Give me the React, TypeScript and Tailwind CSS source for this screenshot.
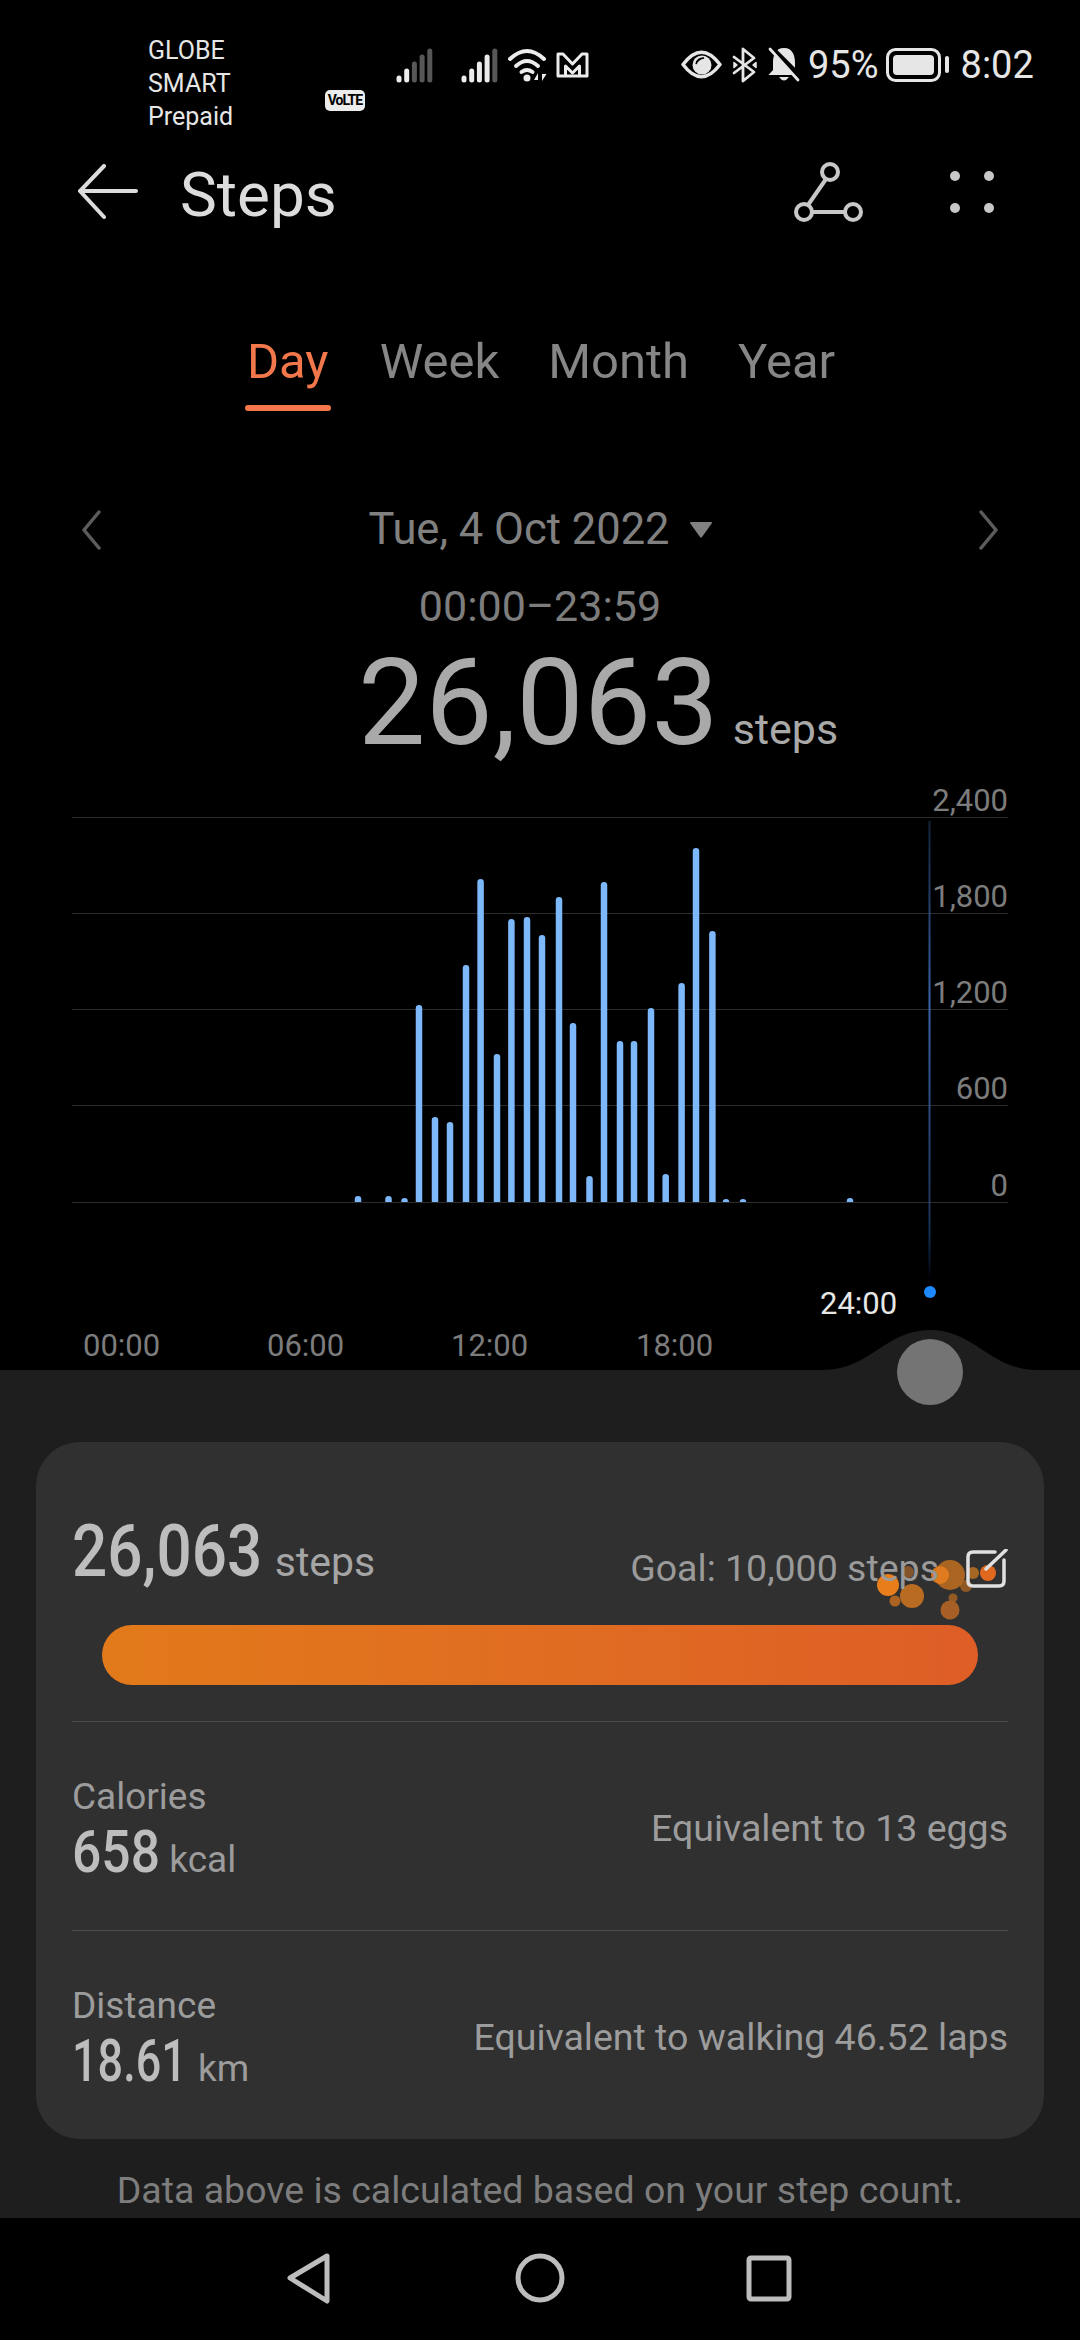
import React from 'react';

const bars: [number, number][] = [
  [358, 1197], [388.5, 1197], [404.5, 1199], [419, 1006], [435, 1118], [450, 1123],
  [466, 966], [480.6, 880], [497, 1055], [511.4, 920], [527, 918], [542, 936],
  [559, 898], [573, 1024], [589.5, 1177], [604, 883], [620, 1042], [634, 1042],
  [651, 1009], [665.7, 1175], [681.6, 984], [696, 849], [712.4, 932], [726, 1200],
  [743, 1200], [850, 1199],
];

const gridLines = [818, 914, 1010, 1106, 1203];
const yLabels: [string, number][] = [['2,400', 812], ['1,800', 908], ['1,200', 1004], ['600', 1100], ['0', 1197]];
const xLabels: [string, number][] = [['00:00', 83], ['06:00', 267], ['12:00', 451], ['18:00', 636]];

const bubbles: [number, number, number, string, number][] = [
  [908, 1573, 6, '#a8642a', 0.7],
  [950, 1576, 15, '#c9731f', 0.8],
  [940, 1576, 9, '#ea7f1f', 0.85],
  [966, 1587, 6, '#b86a20', 0.7],
  [973, 1574, 6, '#c4761f', 0.8],
  [988, 1574, 8, '#e0691f', 1],
  [888, 1586, 11, '#e87d1c', 1],
  [912, 1597, 12, '#c26f22', 0.95],
  [895, 1602, 5.5, '#b8691f', 0.9],
  [953, 1599, 4.5, '#a05f24', 0.9],
  [950, 1611, 9.5, '#ad6224', 0.95],
];

function Signal({ bright }: { bright: number }) {
  const tops = [76, 69, 62, 55, 49];
  return (
    <svg width="38" height="36" viewBox="0 47 38 36">
      {tops.map((t, i) => (
        <line
          key={i}
          x1={3 + i * 7.7}
          x2={3 + i * 7.7}
          y1={t + 2}
          y2={80}
          stroke={i < bright ? '#ececec' : '#575757'}
          strokeWidth="5"
          strokeLinecap="round"
        />
      ))}
    </svg>
  );
}

function StatusIcons() {
  return (
    <>
      <svg width="40" height="36" viewBox="506 47 40 36" className="ml-[8px]" fill="none" stroke="#ececec" strokeWidth="4" strokeLinecap="round">
        <path d="M509 59 Q526 43 543 59" />
        <path d="M515 66 Q526 56 537 66" />
        <path d="M520.500 72 Q526 68 531.500 72" />
        <circle cx="526" cy="78" r="3.500" fill="#ececec" stroke="none" />
        <path d="M537 80 V73 L533 80 Z M541 74 V81 L545.500 74 Z" fill="#ececec" stroke="none" />
      </svg>
      <svg width="34" height="28" viewBox="555 52 34 28" className="ml-[9px]" fill="none" stroke="#ececec" strokeWidth="3" strokeLinejoin="round">
        <path d="M557 77 V55 H562 L571.500 65 L581 55 H586 V77 Z" />
        <path d="M564.500 77 V67 L571.500 74 L578.500 67 V77" />
      </svg>
    </>
  );
}

function RightIcons() {
  return (
    <>
      <svg width="42" height="30" viewBox="680 52 42 30" fill="none">
        <path d="M682 66.500 Q700.500 42 719 66.500 Q700.500 91 682 66.500 Z" stroke="#e6e6e6" strokeWidth="3.500" strokeLinejoin="round" />
        <circle cx="701" cy="67" r="9.500" fill="#e6e6e6" />
        <path d="M695 66 A7 7 0 0 1 703 60 A10 10 0 0 0 695 66 Z" fill="#000" stroke="#000" strokeWidth="1.500" />
      </svg>
      <svg width="26" height="38" viewBox="732 47 26 38" className="ml-[9px]" fill="none" stroke="#e6e6e6" strokeWidth="2.800" strokeLinejoin="round" strokeLinecap="round">
        <path d="M734 58 L754 73 L743 82 V50 L754 59 L734 74" />
        <path d="M734 63.500 L737 66 L734 68.500 Z M756 63.500 L753 66 L756 68.500 Z" fill="#e6e6e6" strokeWidth="1.500" />
      </svg>
      <svg width="34" height="36" viewBox="767 49 34 36" className="ml-[9px]">
        <path d="M784 50 C775 50 773 58 773 65 V72 L768.500 77 H799 L795 72 V65 C795 58 793 50 784 50 Z" fill="#e6e6e6" />
        <path d="M779 79 H789 Q784 86 779 79 Z" fill="#e6e6e6" />
        <line x1="771" y1="50" x2="801" y2="80" stroke="#000" strokeWidth="6" />
        <line x1="770" y1="51" x2="798" y2="82" stroke="#e6e6e6" strokeWidth="2.800" strokeLinecap="round" />
      </svg>
      <span className="ml-[7px] text-[38px] leading-none text-[#e6e6e6]">95%</span>
      <svg width="64" height="36" viewBox="883 49 64 36" className="ml-[7px]" fill="none">
        <rect x="884.500" y="51.500" width="52" height="31" rx="8" stroke="#e6e6e6" strokeWidth="3" />
        <rect x="890" y="57" width="41" height="20" rx="4" fill="#e6e6e6" />
        <rect x="942" y="58" width="4" height="17" rx="2" fill="#e6e6e6" />
      </svg>
      <span className="ml-[11px] text-[38px] leading-none text-[#e6e6e6]">8:02</span>
    </>
  );
}

function Chart() {
  return (
    <svg width="1080" height="591" viewBox="0 780 1080 591" className="block" fontFamily="Roboto, sans-serif">
      <defs>
        <linearGradient id="cursor" x1="0" y1="820" x2="0" y2="1280" gradientUnits="userSpaceOnUse">
          <stop offset="0" stopColor="#2f5590" stopOpacity="0.4" />
          <stop offset="0.4" stopColor="#3a64a8" />
          <stop offset="0.85" stopColor="#2a4a80" stopOpacity="0.7" />
          <stop offset="1" stopColor="#1e88ff" stopOpacity="0" />
        </linearGradient>
      </defs>
      {gridLines.map((y) => (
        <line key={y} x1="72" x2="1008" y1={y + 0.5} y2={y + 0.5} stroke="#2c2c2c" strokeWidth="1" />
      ))}
      {yLabels.map(([label, y]) => (
        <text key={label} x="1008" y={y} textAnchor="end" fontSize="31" fill="#7c7c7c">{label}</text>
      ))}
      <rect x="928.500" y="822" width="2" height="458" fill="url(#cursor)" />
      {bars.map(([x, top]) => (
        <path
          key={x}
          d={`M${x - 3.25} 1203 V${top + 3.25} a3.25 3.25 0 0 1 6.5 0 V1203 Z`}
          fill="#7db8fb"
        />
      ))}
      {xLabels.map(([label, x]) => (
        <text key={label} x={x} y="1357" fontSize="31" fill="#7c7c7c">{label}</text>
      ))}
      <text x="820" y="1315" fontSize="31" fill="#e6e6e6">24:00</text>
      <circle cx="930" cy="1293" r="6" fill="#1e88ff" />
      <path
        d="M823 1371 C870 1371 885 1331 930 1331 C975 1331 990 1371 1037 1371 Z"
        fill="#1e1e1e"
      />
    </svg>
  );
}

function MetricRow({ label, value, unit, note, valueClass, unitClass }: {
  label: string;
  value: string;
  unit: string;
  note: string;
  valueClass: string;
  unitClass: string;
}) {
  return (
    <div className="flex items-center justify-between">
      <div className="flex flex-col">
        <span className="text-[37px] leading-[42px] text-[#9c9c9c]">{label}</span>
        <div className="flex items-baseline mt-[5px]">
          <span className={`inline-block origin-left text-[60px] leading-[58px] font-medium text-[#bdbdbd] ${valueClass}`}>{value}</span>
          <span className={`text-[37px] leading-none text-[#9c9c9c] ${unitClass}`}>{unit}</span>
        </div>
      </div>
      <span className="text-[37.5px] leading-none text-[#9c9c9c]">{note}</span>
    </div>
  );
}

export default function App() {
  return (
    <div className="w-[1080px] h-[2340px] bg-black flex flex-col overflow-hidden font-['Roboto',sans-serif]">
      {/* status bar */}
      <div className="h-[142px] flex items-start pl-[148px] pt-[34px]">
        <div className="w-[217px] flex flex-col text-[25px] leading-[33px] text-[#e6e6e6]">
          <span>GLOBE</span>
          <div className="flex items-center">
            <span>SMART Prepaid</span>
            <span className="ml-[7px] w-[41px] h-[21px] rounded-[5px] bg-[#ececec] text-black text-[14px] leading-[21px] font-bold text-center tracking-[-1px]">VoLTE</span>
          </div>
        </div>
        <div className="ml-[31px] mt-[13px] flex items-center">
          <Signal bright={2} />
          <div className="ml-[27px]"><Signal bright={4} /></div>
          <StatusIcons />
        </div>
        <div className="ml-[91px] mt-[12px] flex items-center">
          <RightIcons />
        </div>
      </div>

      {/* header */}
      <div className="h-[100px] flex items-center pl-[78px] pr-[86px]">
        <svg width="60" height="56" viewBox="78 164 60 56" fill="none" stroke="#dcdcdc" strokeWidth="4" strokeLinecap="round">
          <path d="M136 191 H80 M104 166 L80 191 L104 217" />
        </svg>
        <span className="ml-[42px] mt-[6px] text-[62px] leading-none text-[#dcdcdc]">Steps</span>
        <svg width="70" height="70" viewBox="794 157 70 70" className="ml-auto" fill="none" stroke="#c8c8c8" strokeWidth="4">
          <circle cx="830" cy="172" r="8" />
          <circle cx="804" cy="212" r="8" />
          <circle cx="853" cy="212" r="8" />
          <path d="M826 179 L808 205 M812 212 H845" />
        </svg>
        <svg width="44" height="44" viewBox="950 169 44 44" className="ml-[86px]" fill="#c8c8c8">
          <circle cx="955" cy="175" r="5" />
          <circle cx="989" cy="175" r="5" />
          <circle cx="955" cy="207" r="5" />
          <circle cx="989" cy="207" r="5" />
        </svg>
      </div>

      {/* tabs */}
      <div className="mt-[89px] h-[80px] flex justify-center items-start text-[49px] leading-[62px] text-[#868686] gap-[49px]">
        <div className="flex flex-col items-center">
          <span className="text-[#f2784b]">Day</span>
          <div className="mt-[12px] w-[86px] h-[6px] rounded-full bg-[#f2784b]" />
        </div>
        <span>Week</span>
        <span>Month</span>
        <span>Year</span>
      </div>

      {/* date */}
      <div className="mt-[89px] h-[60px] flex items-center justify-between px-[81px] text-[#808080]">
        <svg width="20" height="40" viewBox="0 0 20 40" fill="none" stroke="#5c5c5c" strokeWidth="3.500" strokeLinecap="round" strokeLinejoin="round">
          <path d="M18 2 L3 20 L18 38" />
        </svg>
        <div className="flex items-center">
          <span className="text-[43.5px] leading-none">Tue, 4 Oct 2022</span>
          <svg width="22" height="16" viewBox="0 0 22 16" className="ml-[20px]" fill="#808080">
            <path d="M0 1 Q0 0 1 0 H21 Q22 0 22 1 L12 15 Q11 16 10 15 Z" />
          </svg>
        </div>
        <svg width="20" height="40" viewBox="0 0 20 40" fill="none" stroke="#5c5c5c" strokeWidth="3.500" strokeLinecap="round" strokeLinejoin="round">
          <path d="M2 2 L17 20 L2 38" />
        </svg>
      </div>

      <div className="mt-[22px] text-center text-[43px] leading-[48px] text-[#7d7d7d]">00:00–23:59</div>

      <div className="mt-[3px] h-[146px] flex justify-center items-baseline pl-[116px] text-[#a9a9a9]">
        <span className="text-[120px] leading-[140px]">26,063</span>
        <span className="ml-[14px] text-[43px] leading-none">steps</span>
      </div>

      <Chart />

      {/* lower panel */}
      <div className="relative flex-1 bg-[#1e1e1e] px-[36px] pt-[72px]">
        <div className="absolute left-[897px] -top-[31px] w-[66px] h-[66px] rounded-full bg-[#747474]" />
        <div className="relative h-[697px] rounded-[44px] bg-[#303030] px-[36px] pt-[74px]">
          <svg width="150" height="90" viewBox="870 1545 150 90" className="absolute left-[834px] top-[102px]">
            {bubbles.map(([cx, cy, r, fill, opacity], i) => (
              <circle key={i} cx={cx} cy={cy} r={r} fill={fill} opacity={opacity} />
            ))}
          </svg>
          <div className="relative h-[70px] flex items-baseline">
            <span className="inline-block origin-left scale-x-[0.85] text-[73px] leading-[70px] font-medium text-[#bdbdbd]">26,063</span>
            <span className="-ml-[21px] text-[41px] leading-none text-[#a5a5a5]">steps</span>
            <div className="ml-auto flex items-center translate-y-[5px]">
              <span className="text-[37.5px] leading-none text-[#9a9a9a]">Goal: 10,000 steps</span>
              <svg width="42" height="40" viewBox="964 1545 42 40" className="ml-[27px]" fill="none" stroke="#e0e0e0" strokeWidth="3.500" strokeLinecap="round">
                <path d="M993 1548 H971 Q966 1548 966 1553 V1577 Q966 1582 971 1582 H997 Q1002 1582 1002 1577 V1556" />
                <path d="M984 1565 L1004 1546" />
              </svg>
            </div>
          </div>
          <div className="mt-[39px] mx-[30px] h-[60px] rounded-full bg-gradient-to-r from-[#e27a1a] to-[#de5e26]" />
          <div className="mt-[36px] h-px bg-[#4c4c4c]" />
          <div className="mt-[54px]">
            <MetricRow label="Calories" value="658" unit="kcal" note="Equivalent to 13 eggs" valueClass="scale-x-[0.86]" unitClass="-ml-[5px]" />
          </div>
          <div className="mt-[49px] h-px bg-[#4c4c4c]" />
          <div className="mt-[54px]">
            <MetricRow label="Distance" value="18.61" unit="km" note="Equivalent to walking 46.52 laps" valueClass="scale-x-[0.75]" unitClass="-ml-[27px]" />
          </div>
        </div>
        <p className="mt-[27px] text-center text-[37.5px] leading-[48px] whitespace-nowrap text-[#7d7d7d]">Data above is calculated based on your step count.</p>
      </div>

      {/* nav bar */}
      <div className="h-[122px] bg-black flex items-center justify-center">
        <svg width="560" height="60" viewBox="260 2250 560 60" fill="none" stroke="#bdbdbd" strokeWidth="5" strokeLinejoin="round">
          <path d="M327 2257 L290 2279 L327 2302 Z" />
          <circle cx="540" cy="2279" r="22" />
          <rect x="749" y="2259" width="40" height="41" rx="2" />
        </svg>
      </div>
    </div>
  );
}
